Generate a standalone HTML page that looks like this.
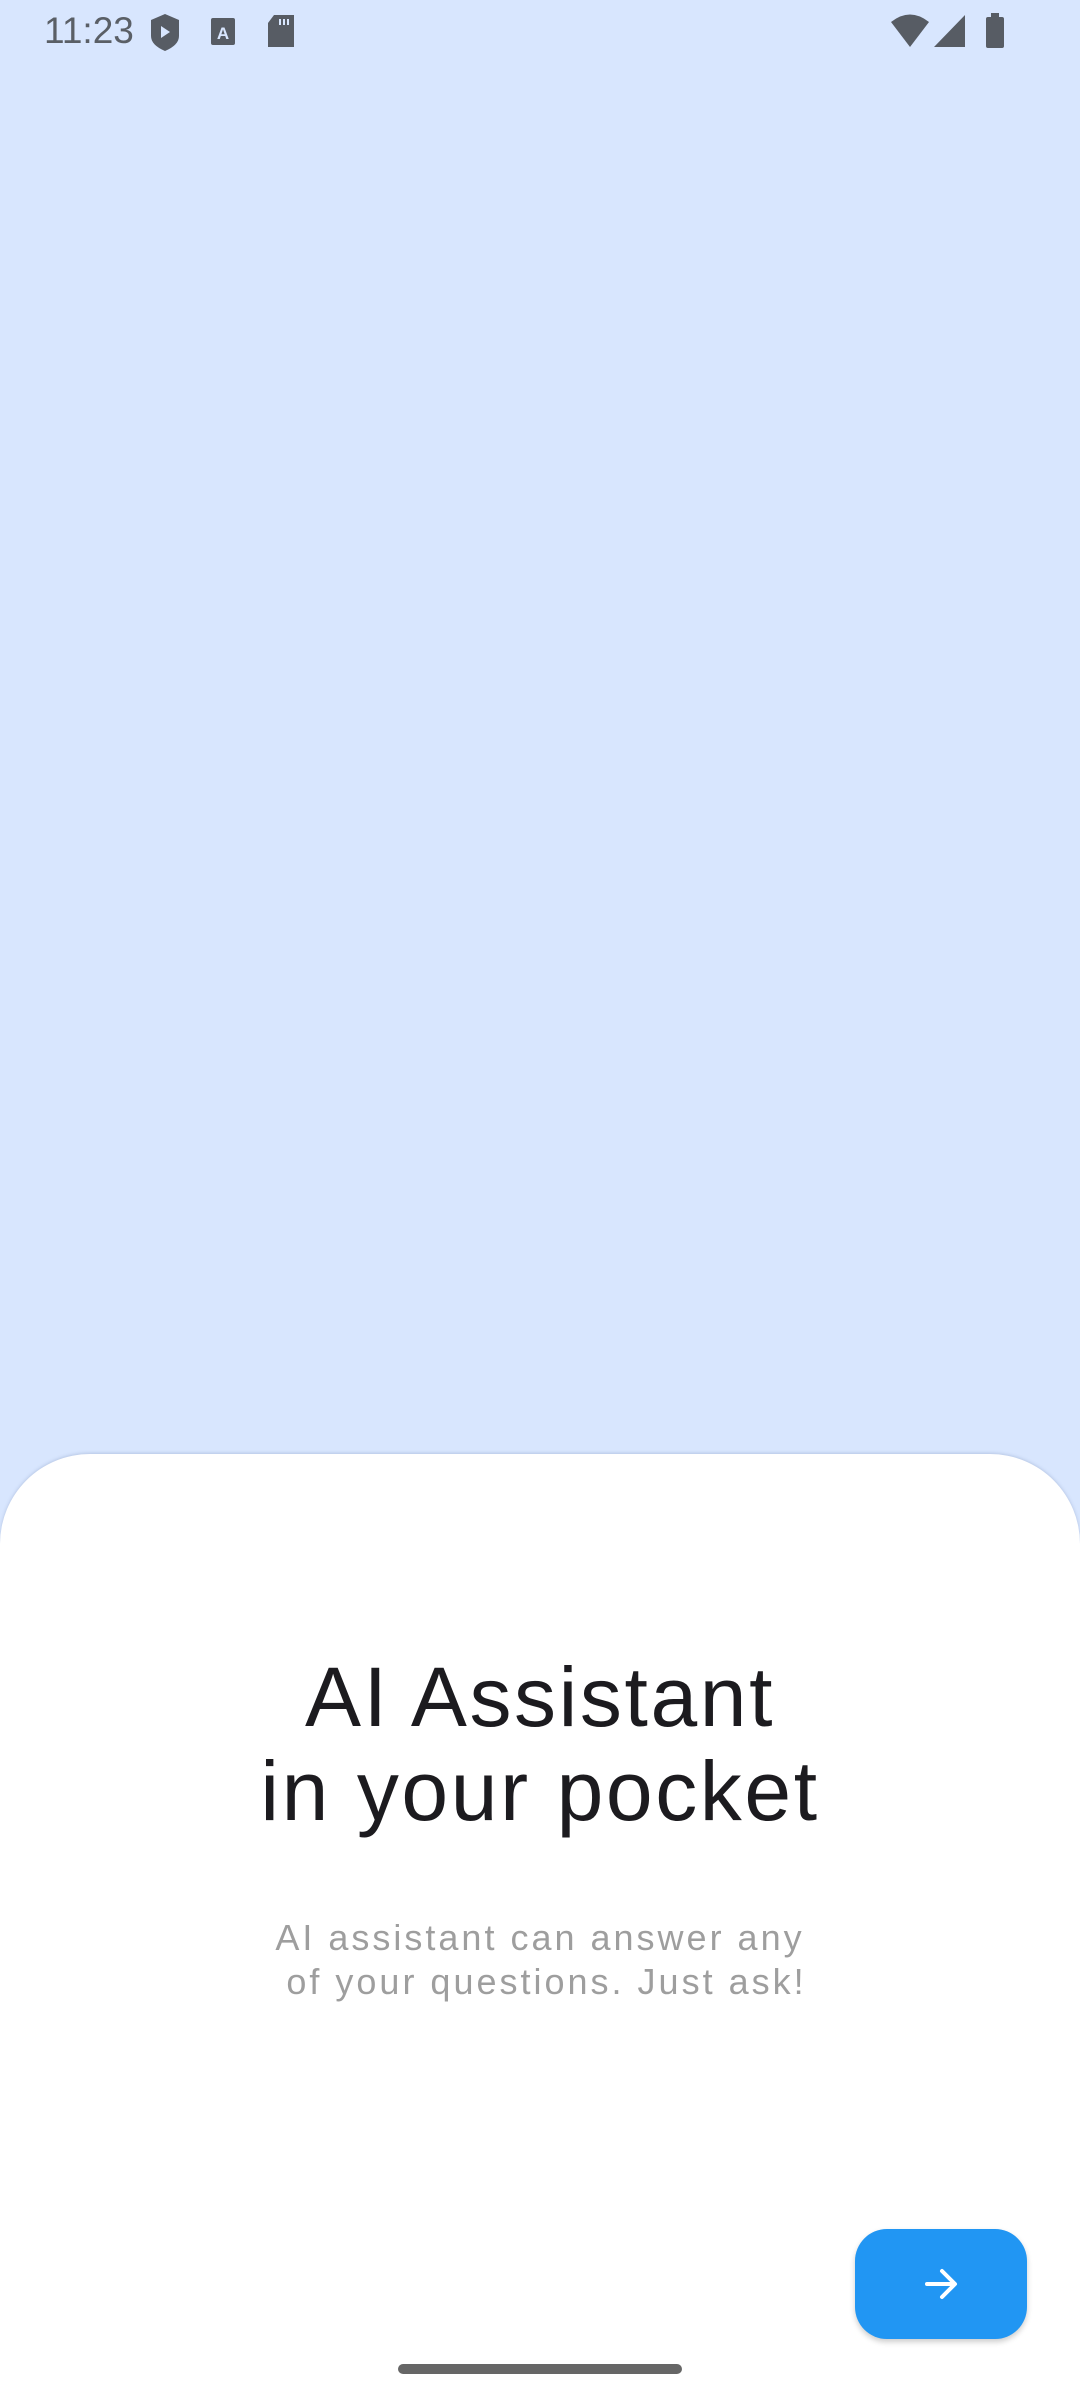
<!DOCTYPE html>
<html><head><meta charset="utf-8"><style>
html,body{margin:0;padding:0}
body{width:1080px;height:2400px;background:#d8e6fe;position:relative;overflow:hidden;font-family:"Liberation Sans",sans-serif}
.sheet{position:absolute;left:0;top:1454px;width:1080px;height:946px;background:#fff;border-radius:90px 90px 0 0;box-shadow:0 -1px 3px rgba(120,140,180,0.35)}
.t{position:absolute;left:0;width:1080px;text-align:center;color:#1c1b1f;font-size:84px;letter-spacing:2.6px;white-space:nowrap}
.s{position:absolute;left:0;width:1080px;text-align:center;color:#9e9e9e;font-size:36px;letter-spacing:3px;white-space:nowrap}
.btn{position:absolute;left:855px;top:2229px;width:172px;height:110px;border-radius:32px;background:#2196f3;box-shadow:0 3px 6px rgba(0,0,0,0.2)}
.bar{position:absolute;left:398px;top:2364px;width:284px;height:10px;border-radius:5px;background:#666}
.time{position:absolute;left:44px;top:10px;font-size:37px;color:#5a5f66}
</style></head><body>
<div class="time">11:23</div>
<svg style="position:absolute;left:0;top:0" width="1080" height="70">
<g fill="#575c64">
<path d="M165 14 L179 20 L179 36 Q179 45 165 51 Q151 45 151 36 L151 20 Z"/>
<path d="M161 26 L170 32 L161 38 Z" fill="#d8e6fe"/>
<rect x="211" y="18" width="24" height="27" rx="2"/>
<text x="223" y="39" font-size="17" font-weight="bold" fill="#d8e6fe" text-anchor="middle" font-family="Liberation Sans">A</text>
<path d="M274 15 L294 15 L294 47 L268 47 L268 23 Z"/>
<rect x="279" y="19" width="2" height="6" fill="#d8e6fe"/><rect x="283" y="19" width="2" height="6" fill="#d8e6fe"/><rect x="287" y="19" width="2" height="6" fill="#d8e6fe"/>
<path d="M891 22 Q910 7 929 22 L910 47 Z"/>
<path d="M965 15 L965 47 L934 47 Z"/>
<rect x="986" y="17" width="18" height="31" rx="2"/><rect x="991" y="13" width="8" height="5"/>
</g></svg>
<div class="sheet"></div>
<div class="t" style="top:1650px;line-height:94px">AI Assistant<br>in your pocket</div>
<div class="s" style="top:1916px;line-height:44px">AI assistant can answer any<br>&nbsp;of your questions. Just ask!</div>
<div class="btn"><svg width="172" height="110"><g stroke="#fff" stroke-width="4" fill="none" stroke-linecap="round" stroke-linejoin="round"><path d="M72 55 H99"/><path d="M87 42 L100 55 L87 68"/></g></svg></div>
<div class="bar"></div>
</body></html>
